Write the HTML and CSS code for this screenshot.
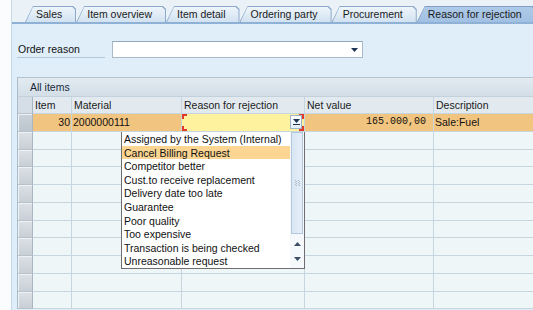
FILE: index.html
```html
<!DOCTYPE html>
<html>
<head>
<meta charset="utf-8">
<link rel="stylesheet" href="styles.css">
</head>
<body>
<div class="window">
  <div class="tabstrip">
    <div class="tab">Sales</div>
    <div class="tab">Item overview</div>
    <div class="tab">Item detail</div>
    <div class="tab">Ordering party</div>
    <div class="tab">Procurement</div>
    <div class="tab active">Reason for rejection</div>
  </div>
  <div class="panel">
    <div class="field-row">
      <div class="field-label">Order reason</div>
      <div class="combo">
        <svg class="arrow" width="7" height="4" viewBox="0 0 7 4"><path d="M0 0h7L3.5 4z"/></svg>
      </div>
    </div>
    <div class="table-box">
      <div class="table-title">All items</div>
      <div class="grid">
        <div class="sel hsel"></div><div class="h">Item</div><div class="h">Material</div><div class="h">Reason for rejection</div><div class="h">Net value</div><div class="h">Description</div>

        <div class="sel cur"></div><div class="c hi num">30</div><div class="c hi">2000000111</div><div class="c edit"><span class="cell-btn"><svg width="7" height="6" viewBox="0 0 7 6"><path d="M0 0h7L3.5 4z"/><path d="M0 5h7v1H0z"/></svg></span></div><div class="c hi mono">165.000,00</div><div class="c hi">Sale:Fuel</div>

        <div class="sel"></div><div class="c"></div><div class="c"></div><div class="c"></div><div class="c"></div><div class="c"></div>
        <div class="sel"></div><div class="c"></div><div class="c"></div><div class="c"></div><div class="c"></div><div class="c"></div>
        <div class="sel"></div><div class="c"></div><div class="c"></div><div class="c"></div><div class="c"></div><div class="c"></div>
        <div class="sel"></div><div class="c"></div><div class="c"></div><div class="c"></div><div class="c"></div><div class="c"></div>
        <div class="sel"></div><div class="c"></div><div class="c"></div><div class="c"></div><div class="c"></div><div class="c"></div>
        <div class="sel"></div><div class="c"></div><div class="c"></div><div class="c"></div><div class="c"></div><div class="c"></div>
        <div class="sel"></div><div class="c"></div><div class="c"></div><div class="c"></div><div class="c"></div><div class="c"></div>
        <div class="sel"></div><div class="c"></div><div class="c"></div><div class="c"></div><div class="c"></div><div class="c"></div>
        <div class="sel"></div><div class="c"></div><div class="c"></div><div class="c"></div><div class="c"></div><div class="c"></div>
        <div class="sel"></div><div class="c"></div><div class="c"></div><div class="c"></div><div class="c"></div><div class="c"></div>
      </div>
      <div class="dropdown">
        <ul class="options">
          <li>Assigned by the System (Internal)</li>
          <li class="picked">Cancel Billing Request</li>
          <li>Competitor better</li>
          <li>Cust.to receive replacement</li>
          <li>Delivery date too late</li>
          <li>Guarantee</li>
          <li>Poor quality</li>
          <li>Too expensive</li>
          <li>Transaction is being checked</li>
          <li>Unreasonable request</li>
        </ul>
        <div class="scrollbar">
          <div class="thumb">
            <svg width="5" height="6" viewBox="0 0 5 6"><path d="M0 0h1v1H0zM3 0h1v1H3zM0 2h1v1H0zM3 2h1v1H3zM0 4h1v1H0zM3 4h1v1H3zM1 1h1v1H1zM4 1h1v1H4zM1 3h1v1H1zM4 3h1v1H4zM1 5h1v1H1zM4 5h1v1H4z"/></svg>
          </div>
          <div class="sbtn"><svg width="7" height="4" viewBox="0 0 7 4"><path d="M3.5 0L7 4H0z"/></svg></div>
          <div class="sbtn"><svg width="7" height="4" viewBox="0 0 7 4"><path d="M0 0h7L3.5 4z"/></svg></div>
        </div>
      </div>
    </div>
  </div>
</div>
</body>
</html>
```
FILE: styles.css
```css
* { box-sizing: border-box; }

body {
  margin: 0;
  background: #fbfcfd;
  font-family: "Liberation Sans", Arial, sans-serif;
  font-size: 10.5px;
  color: #111;
  overflow: hidden;
}

.window {
  margin-left: 11px;
  width: 522px;
  height: 310px;
  border-left: 1px solid #c6d9e8;
  background: #eaf2f8;
  overflow: hidden;
}

/* tabs */
.tabstrip {
  display: flex;
  align-items: flex-end;
  height: 22px;
  padding-left: 13px;
}

.tab {
  position: relative;
  height: 16px;
  line-height: 16px;
  padding: 0 14px 0 11px;
  white-space: nowrap;
  color: #1b1b1b;
  background: #8eaacb;
  clip-path: polygon(8px 0, calc(100% - 3px) 0, 100% 3px, 100% 100%, 0 100%);
}

.tab::before {
  content: "";
  position: absolute;
  inset: 1px 1px 0 1px;
  z-index: -1;
  background: linear-gradient(#eef5fb, #d2e2f1);
  clip-path: polygon(7px 0, calc(100% - 3px) 0, 100% 3px, 100% 100%, 0 100%);
}

.tab.active { background: #7f9fc4; }
.tab.active::before { background: linear-gradient(#aecae8, #a2c0e2); }

/* panel */
.panel {
  border-top: 2px solid #8fb1d5;
  background: #dfeef8;
  height: 288px;
  padding: 17px 0 0 5px;
}

.field-row {
  display: flex;
  align-items: flex-end;
  height: 17px;
}

.field-label {
  width: 88px;
  height: 17px;
  line-height: 16px;
  padding-left: 1px;
  border-bottom: 1px solid #b5c8d8;
}

.combo {
  margin-left: 7px;
  width: 251px;
  height: 17px;
  background: #fff;
  border: 1px solid #a9b9c8;
  border-top-color: #95a8ba;
  display: flex;
  align-items: center;
  justify-content: flex-end;
  padding-right: 4px;
}

.arrow { fill: #1f3554; }

/* table */
.table-box {
  position: relative;
  margin-top: 19px;
  width: 560px;
  border-left: 1px solid #a8bccc;
  border-top: 1px solid #b0c4d4;
}

.table-title {
  height: 19px;
  line-height: 19px;
  padding-left: 12px;
  color: #1a2a3a;
  background: linear-gradient(#e3ebf1, #d3dee7);
  border-bottom: 1px solid #c3d1dc;
}

.grid {
  display: grid;
  grid-template-columns: 15px 39px 110px 123px 129px 140px;
  grid-template-rows: 17px;
  grid-auto-rows: 17.75px;
}

.grid > div {
  border-right: 1px solid #c7d5df;
  border-bottom: 1px solid #c7d5df;
  white-space: nowrap;
  overflow: hidden;
}

.h {
  background: #e2eaf0;
  line-height: 16px;
  padding-left: 2px;
  color: #1b1b1b;
}

.c {
  background: #eef6f7;
  line-height: 16px;
  padding-left: 1px;
}

.grid > .sel {
  background: linear-gradient(#dbe1e6, #c8cfd6);
  border-right: 1px solid #aab6c1;
  border-bottom: 1px solid #b7c2cb;
  box-shadow: inset 1px 1px 0 #eef2f5;
}

.grid > .hsel {
  background: #d5dee6;
  box-shadow: none;
}

.grid > .sel.cur { background: linear-gradient(#cbd2d9, #bcc5ce); }

.c.hi { background: #f1c47f; }

.num { text-align: right; padding-right: 1px; }

.mono {
  font-family: "Liberation Mono", "Courier New", monospace;
  font-size: 10px;
  text-align: right;
  padding-right: 7px;
}

.c.edit {
  display: flex;
  justify-content: flex-end;
  align-items: flex-start;
  background:
    linear-gradient(#e23a2a, #e23a2a) left top / 5px 2px no-repeat,
    linear-gradient(#e23a2a, #e23a2a) left top / 2px 5px no-repeat,
    linear-gradient(#e23a2a, #e23a2a) right top / 5px 2px no-repeat,
    linear-gradient(#e23a2a, #e23a2a) right top / 2px 5px no-repeat,
    linear-gradient(#e23a2a, #e23a2a) left bottom / 5px 2px no-repeat,
    linear-gradient(#e23a2a, #e23a2a) left bottom / 2px 5px no-repeat,
    linear-gradient(#e23a2a, #e23a2a) right bottom / 5px 2px no-repeat,
    linear-gradient(#e23a2a, #e23a2a) right bottom / 2px 5px no-repeat,
    #fff29e;
}

.cell-btn {
  width: 12px;
  height: 14px;
  margin: 1px 2px 0 0;
  border: 1px solid #9fb4c8;
  background: linear-gradient(#ffffff, #e3edf6);
  display: flex;
  align-items: center;
  justify-content: center;
  fill: #1f3554;
}

/* dropdown list */
.dropdown {
  position: absolute;
  left: 103px;
  top: 54px;
  width: 184px;
  height: 137px;
  background: #fff;
  border: 1px solid #6e6e6e;
  border-top: none;
  display: flex;
}

.options {
  list-style: none;
  margin: 0;
  padding: 0;
  flex: 1;
}

.options li {
  height: 13.6px;
  line-height: 14px;
  padding-left: 2px;
  white-space: nowrap;
  color: #111;
}

.options li.picked { background: #fbd591; }

.scrollbar {
  width: 14px;
  display: flex;
  flex-direction: column;
  background: #f6f9fc;
}

.thumb {
  height: 102px;
  margin: 0 1px 2px 1px;
  border: 1px solid #b3c8dc;
  background: linear-gradient(90deg, #d8e6f3, #e4eef8);
  display: flex;
  align-items: center;
  justify-content: center;
  fill: #a9bccd;
}

.sbtn {
  height: 15px;
  display: flex;
  align-items: center;
  justify-content: center;
  fill: #3a4f66;
}
```
